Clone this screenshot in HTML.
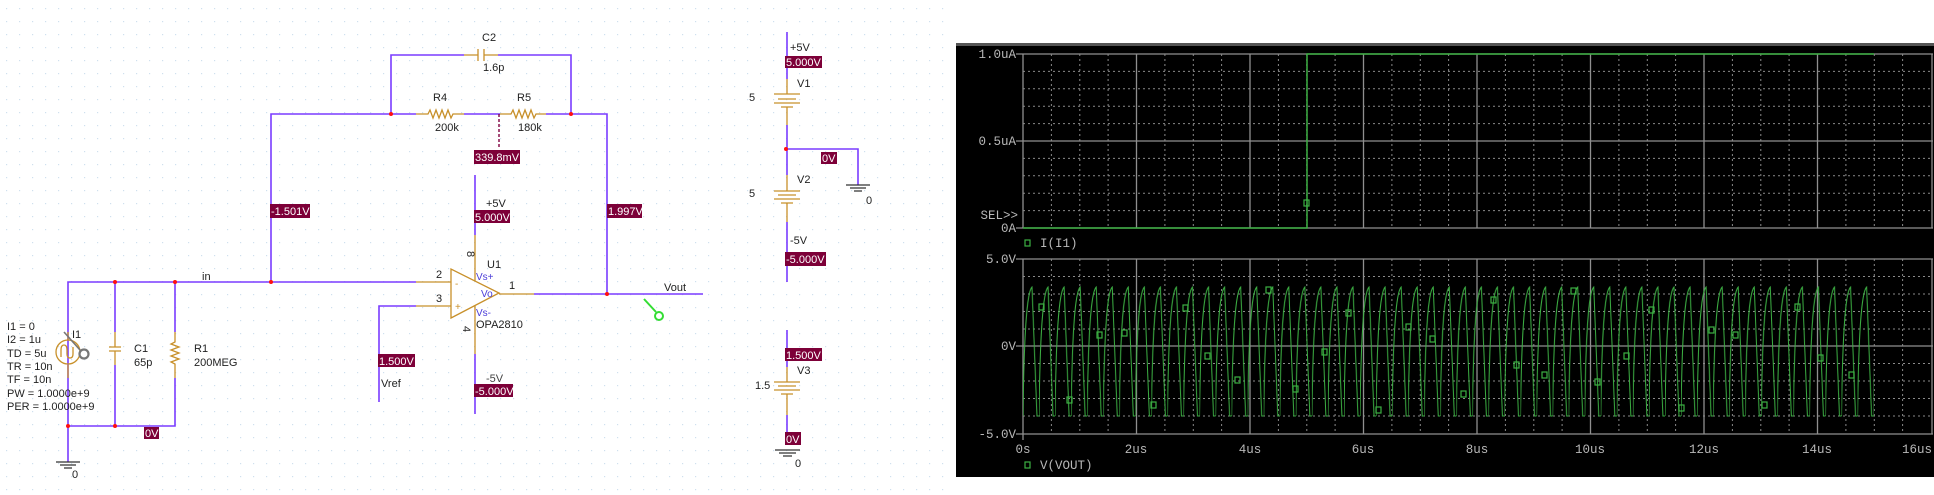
<!DOCTYPE html>
<html><head><meta charset="utf-8"><style>
html,body{margin:0;padding:0;background:#fff;}
svg{display:block;}
.s{font-family:"Liberation Sans",sans-serif;font-size:11px;fill:#222;}
.b{font-family:"Liberation Sans",sans-serif;font-size:11px;fill:#fff;}
.m{font-family:"Liberation Mono",monospace;font-size:12.5px;fill:#b8b8b8;}
</style></head><body>
<svg width="1934" height="495" viewBox="0 0 1934 495" xmlns="http://www.w3.org/2000/svg">
<defs>
<pattern id="dots" x="6" y="8" width="13" height="13" patternUnits="userSpaceOnUse"><rect x="0" y="0" width="1.2" height="1.2" fill="#cfe0ee"/></pattern>
<pattern id="wave" x="1023" y="0" width="16.05" height="495" patternUnits="userSpaceOnUse">
<path d="M0,416 C1,330 4,292 9,287 L14,416 L16.05,416" fill="none" stroke="#3cb043" stroke-width="1"/></pattern>
</defs>
<rect x="0" y="0" width="950" height="495" fill="url(#dots)"/>

<g fill="none" stroke-width="1.6">
<!-- blue wires -->
<g stroke="#7a3cff">
<path d="M391,114 V55 H464 M498,55 H571 V114"/>
<path d="M271,282 V114 H416 M464,114 H500 M546,114 H607 V294"/>
<path d="M68,378 V282 H416 M115,282 V332 M175,282 V332"/>
<path d="M68,378 V462 M68,426 H175 V378 M115,365 V426"/>
<path d="M379,402 V306 H416"/>
<path d="M475,175 V235 M475,354 V414"/>
<path d="M534,294 H703"/>
<path d="M787,32 V79 M787,125 V175 M787,149 H858 V185 M787,222 V282"/>
<path d="M787,330 V367 M787,415 V440"/>
</g>
<!-- gold components -->
<g stroke="#c8902a" stroke-width="1.3">
<path d="M464,55 H478 M478,49 V61 M484,49 V61 M484,55 H498"/>
<path d="M416,114 H428 l2,-4 3,8 3,-8 3,8 3,-8 3,8 3,-8 3,8 2,-4 H464"/>
<path d="M500,114 H511 l2,-4 3,8 3,-8 3,8 3,-8 3,8 3,-8 3,8 2,-4 H546"/>
<path d="M416,282 H451 M416,306 H451 M451,269 V318 L499,293 Z M499,294 H534 M475,235 V281 M475,306 V354"/>
<path d="M115,332 V347 M109,347 H121 M109,351 H121 M115,351 V365"/>
<path d="M175,332 V342 l-4,2 8,3 -8,3 8,3 -8,3 8,3 -8,3 4,2 V378"/>
<path d="M68,332 V340 M68,365 V378"/>
<circle cx="68" cy="352" r="12"/>
<path d="M61,357 V350 Q61,345 64,345 Q67,345 67,350 V354 Q67,358 70,358 Q73,358 73,354 V347"/>
<path d="M787,79 V94 M774,94 H800 M778,99 H796 M774,103 H800 M781,107 H793 M787,107 V125"/>
<path d="M787,175 V191 M774,191 H800 M778,195 H796 M774,199 H800 M781,203 H793 M787,203 V222"/>
<path d="M787,367 V382 M774,382 H800 M778,386 H796 M774,390 H800 M781,394 H793 M787,394 V415"/>
</g>
<!-- grounds -->
<g stroke="#333" stroke-width="1.2">
<path d="M56,462 H80 M60,465 H76 M64,468 H72"/>
<path d="M846,185 H870 M850,188 H866 M854,191 H862"/>
<path d="M775,450 H800 M779,453 H796 M783,456 H792"/>
</g>
<path d="M499,114 V147" stroke="#800040" stroke-dasharray="3,2" stroke-width="1.4"/>
<!-- probe -->
<path d="M644,299 L656,312" stroke="#33dd33" stroke-width="2"/>
<circle cx="659" cy="316" r="4" stroke="#33dd33" stroke-width="2"/>
<path d="M64,332 L80,350" stroke="#777" stroke-width="1.6"/>
<circle cx="84" cy="354" r="4.5" stroke="#777" stroke-width="2.2"/>
</g>
<g fill="#ff1010">
<circle cx="391" cy="114" r="2"/><circle cx="571" cy="114" r="2"/><circle cx="115" cy="282" r="2"/><circle cx="175" cy="282" r="2"/><circle cx="271" cy="282" r="2"/><circle cx="607" cy="294" r="2"/><circle cx="68" cy="426" r="2"/><circle cx="115" cy="426" r="2"/><circle cx="786" cy="149" r="2"/>
</g>

<!-- value boxes -->
<g fill="#7d0038">
<rect x="474" y="150" width="46" height="14"/><rect x="270" y="204" width="40" height="14"/><rect x="607" y="204" width="35" height="14"/>
<rect x="474" y="210" width="36" height="13"/><rect x="378" y="354" width="37" height="13"/><rect x="474" y="384" width="39" height="13"/>
<rect x="144" y="427" width="15" height="12"/>
<rect x="785" y="56" width="37" height="12"/><rect x="821" y="152" width="16" height="12"/><rect x="785" y="252" width="41" height="14"/><rect x="785" y="348" width="37" height="13"/><rect x="785" y="432" width="16" height="13"/>
</g>
<g class="b">
<text x="475" y="161">339.8mV</text><text x="271" y="215">-1.501V</text><text x="608" y="215">1.997V</text>
<text x="475" y="221">5.000V</text><text x="379" y="365">1.500V</text><text x="475" y="395">-5.000V</text>
<text x="145" y="437">0V</text>
<text x="786" y="66">5.000V</text><text x="822" y="162">0V</text><text x="786" y="263">-5.000V</text><text x="786" y="359">1.500V</text><text x="786" y="443">0V</text>
</g>

<g class="s">
<text x="482" y="41">C2</text><text x="483" y="71">1.6p</text>
<text x="433" y="101">R4</text><text x="435" y="131">200k</text>
<text x="517" y="101">R5</text><text x="518" y="131">180k</text>
<text x="202" y="280">in</text>
<text x="436" y="278">2</text><text x="436" y="302">3</text>
<text x="486" y="207">+5V</text>
<text x="487" y="268">U1</text>
<text x="509" y="289">1</text>
<text x="476" y="328">OPA2810</text>
<text x="664" y="291">Vout</text>
<text x="381" y="387">Vref</text>
<text x="486" y="382" fill="#444">-5V</text>
<text x="134" y="352">C1</text><text x="134" y="366">65p</text>
<text x="194" y="352">R1</text><text x="194" y="366">200MEG</text>
<text x="72" y="478">0</text>
<text x="72" y="338">I1</text>
<text x="7" y="330">I1 = 0</text><text x="7" y="343">I2 = 1u</text><text x="7" y="357">TD = 5u</text><text x="7" y="370">TR = 10n</text><text x="7" y="383">TF = 10n</text><text x="7" y="397">PW = 1.0000e+9</text><text x="7" y="410">PER = 1.0000e+9</text>
<text x="790" y="51">+5V</text><text x="797" y="87">V1</text><text x="749" y="101">5</text>
<text x="797" y="183">V2</text><text x="749" y="197">5</text><text x="866" y="204">0</text>
<text x="790" y="244">-5V</text>
<text x="797" y="374">V3</text><text x="755" y="389">1.5</text><text x="795" y="467">0</text>
</g>
<text x="463" y="255" class="s" transform="rotate(90 467 255)">8</text>
<text x="463" y="334" class="s" transform="rotate(90 467 330)">4</text>
<g font-family="Liberation Sans,sans-serif" font-size="10px" fill="#4a3cd8">
<text x="476" y="280">Vs+</text><text x="481" y="297">Vo</text><text x="476" y="316">Vs-</text>
</g>
<g font-family="Liberation Sans,sans-serif" font-size="10px" fill="#c8902a"><text x="455" y="287">-</text><text x="455" y="310">+</text></g>

<!-- scope -->
<rect x="956" y="43" width="978" height="434" fill="#000"/>
<rect x="956" y="43" width="978" height="3" fill="#555"/>
<g stroke="#8a8a8a" stroke-width="1" stroke-dasharray="2,3" fill="none">
<path d="M1023,71.4H1933M1023,88.8H1933M1023,106.2H1933M1023,123.6H1933M1023,158.4H1933M1023,175.8H1933M1023,193.2H1933M1023,210.6H1933"/>
<path d="M1023,276.5H1933M1023,294H1933M1023,311.5H1933M1023,329H1933M1023,363.5H1933M1023,381H1933M1023,398.5H1933M1023,416H1933"/>
<path d="M1051.4,54V228M1079.8,54V228M1108.1,54V228M1164.9,54V228M1193.3,54V228M1221.6,54V228M1278.4,54V228M1306.8,54V228M1335.1,54V228M1391.9,54V228M1420.3,54V228M1448.6,54V228M1505.4,54V228M1533.8,54V228M1562.1,54V228M1618.9,54V228M1647.3,54V228M1675.6,54V228M1732.4,54V228M1760.8,54V228M1789.1,54V228M1845.9,54V228M1874.3,54V228M1902.6,54V228"/>
<path d="M1051.4,259V434M1079.8,259V434M1108.1,259V434M1164.9,259V434M1193.3,259V434M1221.6,259V434M1278.4,259V434M1306.8,259V434M1335.1,259V434M1391.9,259V434M1420.3,259V434M1448.6,259V434M1505.4,259V434M1533.8,259V434M1562.1,259V434M1618.9,259V434M1647.3,259V434M1675.6,259V434M1732.4,259V434M1760.8,259V434M1789.1,259V434M1845.9,259V434M1874.3,259V434M1902.6,259V434"/>
</g>
<g stroke="#8f8f8f" stroke-width="1.3" fill="none">
<path d="M1016,54H1933M1016,141H1933M1016,228H1933M1016,259H1933M1016,346H1933M1016,434H1933"/>
<path d="M1023,54V228M1136.5,54V228M1250,54V228M1363.5,54V228M1477,54V228M1590.5,54V228M1704,54V228M1817.5,54V228M1932,54V228"/>
<path d="M1023,259V440M1136.5,259V434M1250,259V434M1363.5,259V434M1477,259V434M1590.5,259V434M1704,259V434M1817.5,259V434M1932,259V434"/>
</g>
<path d="M1023,228H1307V54H1874" fill="none" stroke="#3cb043" stroke-width="1.5"/>
<rect x="1023" y="259" width="851" height="175" fill="url(#wave)"/>
<g fill="none" stroke="#3cb043" stroke-width="1.2">
<rect x="1304" y="200" width="5" height="6"/>
<rect x="1039" y="304" width="5" height="6"/><rect x="1067" y="397" width="5" height="6"/><rect x="1097" y="332" width="5" height="6"/><rect x="1122" y="330" width="5" height="6"/><rect x="1151" y="402" width="5" height="6"/><rect x="1183" y="305" width="5" height="6"/><rect x="1205" y="353" width="5" height="6"/><rect x="1235" y="377" width="5" height="6"/><rect x="1266" y="287" width="5" height="6"/><rect x="1293" y="386" width="5" height="6"/><rect x="1322" y="349" width="5" height="6"/><rect x="1346" y="310" width="5" height="6"/><rect x="1376" y="407" width="5" height="6"/><rect x="1406" y="324" width="5" height="6"/><rect x="1430" y="336" width="5" height="6"/><rect x="1461" y="391" width="5" height="6"/><rect x="1491" y="297" width="5" height="6"/><rect x="1514" y="362" width="5" height="6"/><rect x="1542" y="372" width="5" height="6"/><rect x="1571" y="288" width="5" height="6"/><rect x="1595" y="379" width="5" height="6"/><rect x="1624" y="353" width="5" height="6"/><rect x="1649" y="307" width="5" height="6"/><rect x="1679" y="405" width="5" height="6"/><rect x="1709" y="327" width="5" height="6"/><rect x="1733" y="332" width="5" height="6"/><rect x="1762" y="402" width="5" height="6"/><rect x="1795" y="304" width="5" height="6"/><rect x="1818" y="355" width="5" height="6"/><rect x="1849" y="372" width="5" height="6"/>
<rect x="1025" y="240" width="5" height="6"/><rect x="1025" y="462" width="5" height="6"/>
</g>
<g class="m" text-anchor="end">
<text x="1016" y="58">1.0uA</text><text x="1016" y="145">0.5uA</text><text x="1018" y="219">SEL&gt;&gt;</text><text x="1016" y="232">0A</text>
<text x="1016" y="263">5.0V</text><text x="1016" y="350">0V</text><text x="1016" y="438">-5.0V</text>
</g>
<g class="m" text-anchor="middle">
<text x="1023" y="453">0s</text><text x="1136" y="453">2us</text><text x="1250" y="453">4us</text><text x="1363" y="453">6us</text><text x="1477" y="453">8us</text><text x="1590" y="453">10us</text><text x="1704" y="453">12us</text><text x="1817" y="453">14us</text><text x="1917" y="453">16us</text>
</g>
<g class="m"><text x="1040" y="247">I(I1)</text><text x="1040" y="469">V(VOUT)</text></g>
</svg>
</body></html>
